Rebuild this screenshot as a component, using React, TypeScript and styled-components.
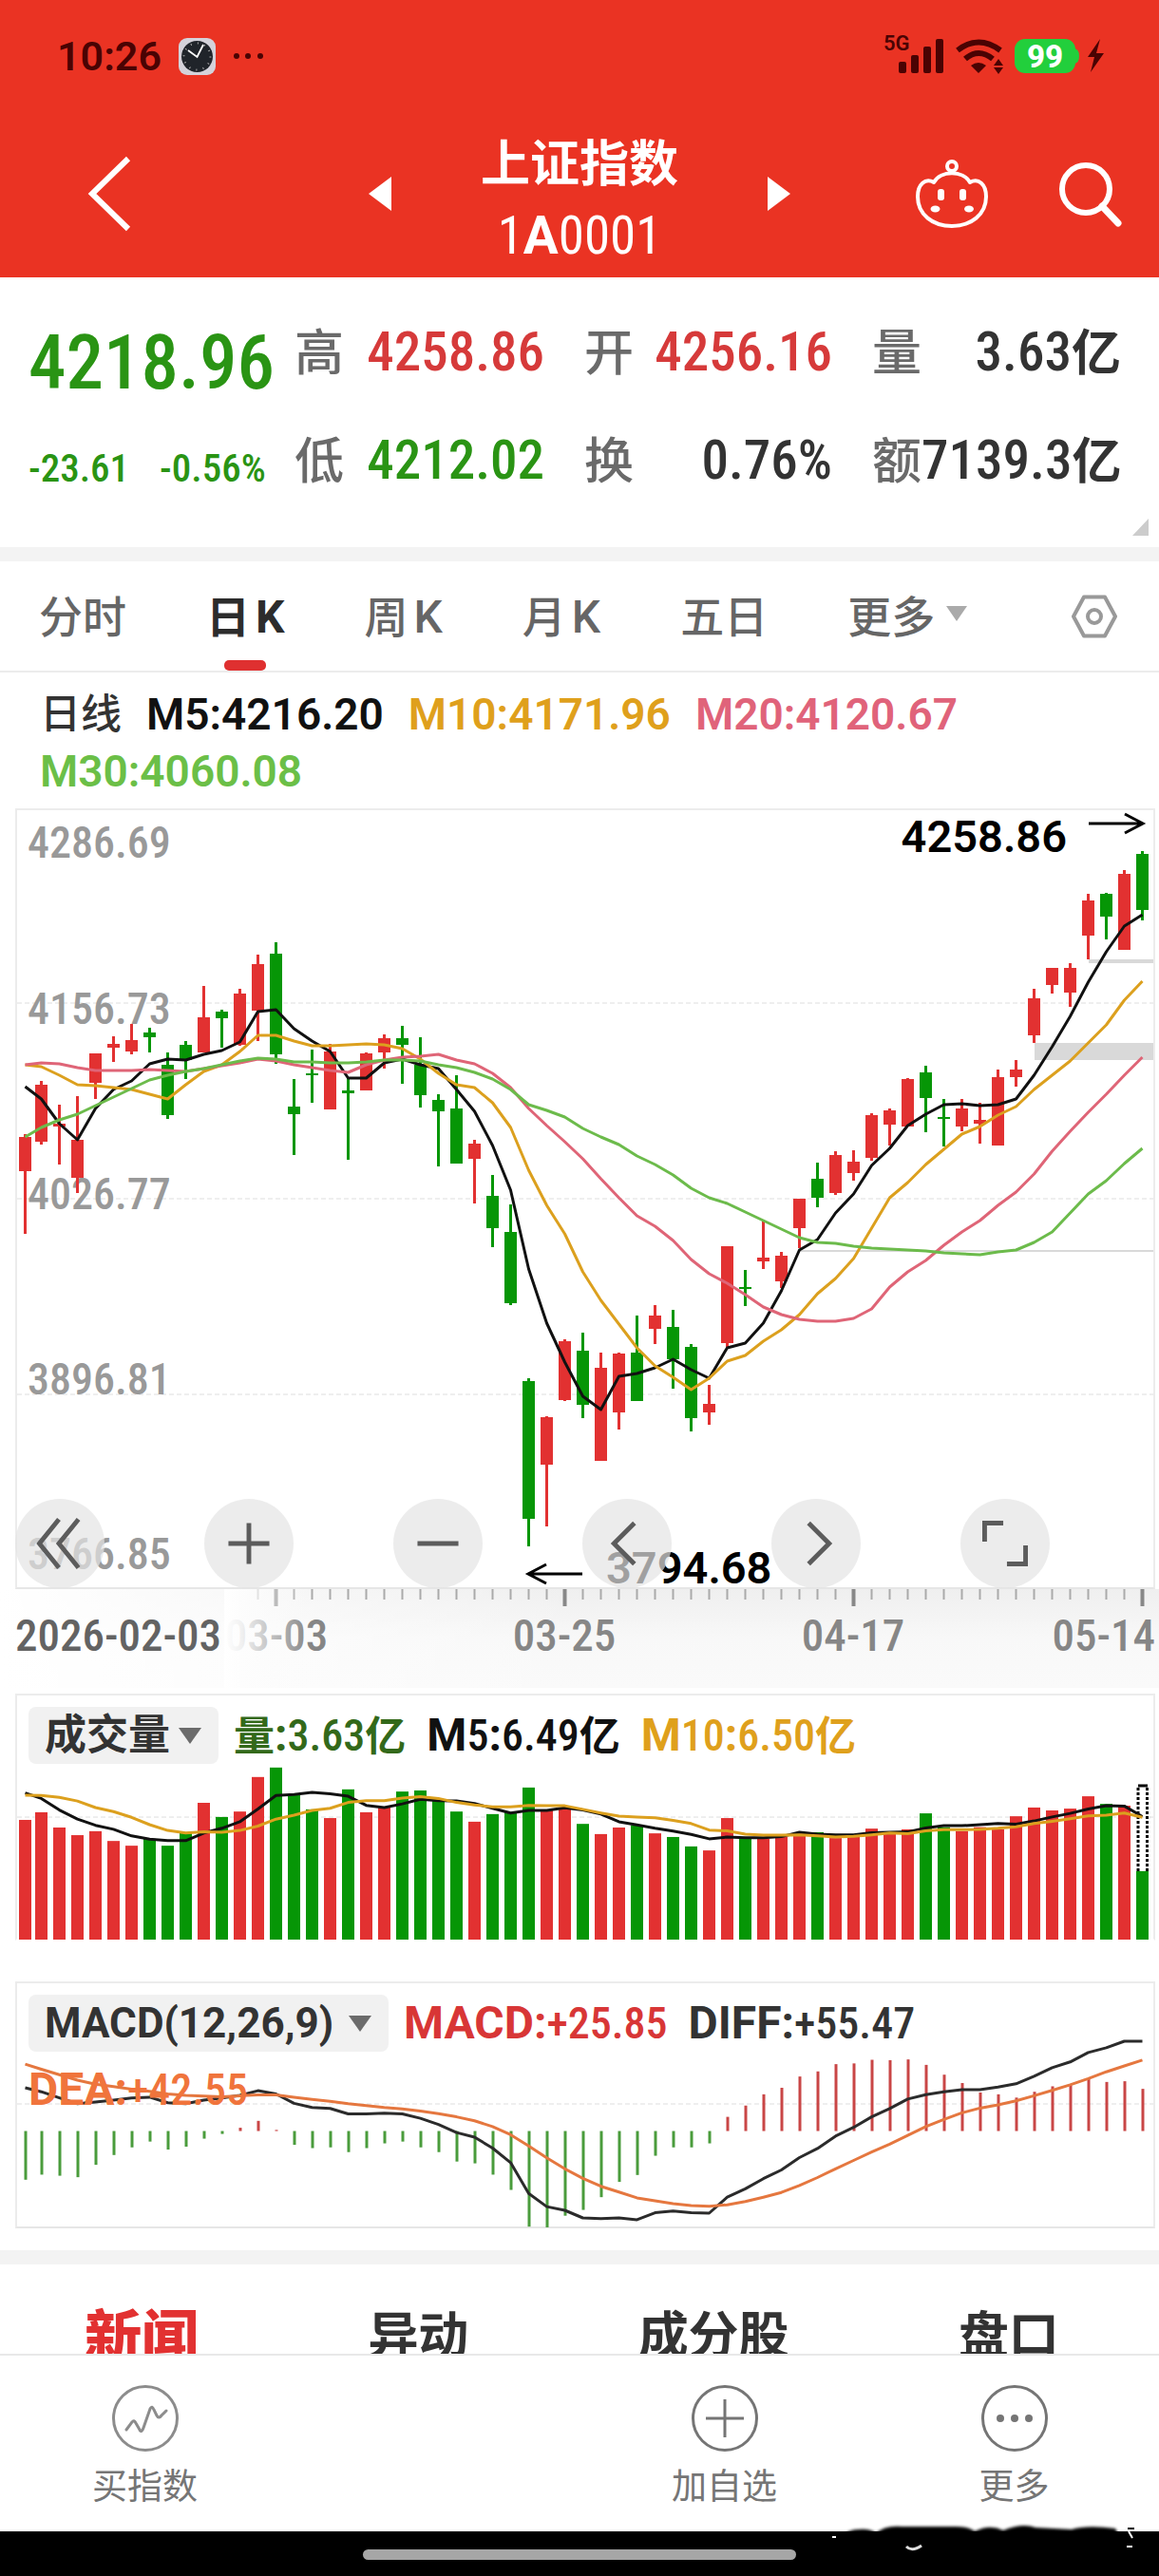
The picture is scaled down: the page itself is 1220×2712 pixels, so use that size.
import React, { useState } from "react";
import styled, { createGlobalStyle } from "styled-components";

const RED = "#e23131";
const GREEN = "#069606";
const UI = 'Roboto, "Noto Sans CJK SC", sans-serif';
const NUM = '"Roboto Condensed", Roboto, "Noto Sans CJK SC", sans-serif';

const GlobalStyle = createGlobalStyle`
  *, *::before, *::after { box-sizing: border-box; }
  body { margin: 0; background: #fff; font-family: ${UI}; color: #333; }
  button, select { border: 0; padding: 0; margin: 0; background: none; font-family: inherit; color: inherit; }
  svg { display: block; }
`;

/* ---------- header ---------- */

const Header = styled.header`
  background: #ea3323;
  color: #fff;
  height: 292px;
`;

const StatusBar = styled.div`
  display: flex;
  align-items: center;
  justify-content: space-between;
  height: 118px;
  padding: 0 54px 0 60px;
  color: #4a0303;
`;

const StatusGroup = styled.div`
  display: flex;
  align-items: center;
  gap: 18px;
`;

const Clock = styled.span`
  font-size: 43px;
  font-weight: 600;
`;

const TitleBar = styled.div`
  display: grid;
  grid-template-columns: 388px 1fr 388px;
  align-items: center;
  height: 172px;
`;

const BackButton = styled.button`
  width: 76px;
  margin-left: 80px;
`;

const Switcher = styled.div`
  display: flex;
  justify-content: space-between;
  align-items: center;
`;

const Title = styled.h1`
  margin: 0;
  padding-top: 14px;
  text-align: center;
  font-size: 52px;
  line-height: 75px;
  font-weight: 700;
`;

const Code = styled.span`
  display: block;
  font-family: ${NUM};
  font-size: 55px;
  font-weight: 400;
  b { font-family: ${UI}; }
`;

const HeaderActions = styled.div`
  display: flex;
  justify-content: flex-end;
  gap: 70px;
  padding-right: 38px;
`;

/* ---------- quote ---------- */

const Quote = styled.section`
  position: relative;
  display: grid;
  grid-template-columns: 310px 1fr;
  height: 284px;
  padding-top: 20px;
`;

const PriceBlock = styled.div`
  padding-left: 30px;
  color: #2a9414;
  font-family: ${NUM};
`;

const Price = styled.div`
  font-size: 79px;
  font-weight: 500;
  line-height: 140px;
`;

const Changes = styled.div`
  display: flex;
  gap: 32px;
  font-size: 41px;
  font-weight: 500;
  line-height: 82px;
`;

const Stats = styled.dl`
  display: grid;
  grid-template-columns: 263px 261px 262px;
  column-gap: 42px;
  grid-auto-rows: 114px;
  margin: 0;
  line-height: 118px;
`;

const Stat = styled.div`
  display: flex;
  justify-content: space-between;
  align-items: baseline;
  white-space: nowrap;
`;

const StatName = styled.dt`
  font-size: 52px;
  font-weight: 500;
  color: #6a6a6a;
`;

const StatValue = styled.dd<{ $color?: string }>`
  margin: 0;
  font-family: ${NUM};
  font-size: 57px;
  font-weight: 500;
  color: ${(p) => p.$color ?? "#333"};
  b { font-size: 52px; }
`;

const Fold = styled.span`
  position: absolute;
  right: 11px;
  bottom: 12px;
  border-left: 17px solid transparent;
  border-bottom: 18px solid #ccc;
`;

const Divider = styled.div`
  height: 15px;
  background: #f3f3f3;
`;

/* ---------- period tabs ---------- */

const Periods = styled.nav`
  display: flex;
  align-items: center;
  gap: 84px;
  height: 117px;
  padding: 0 44px 0 41px;
  border-bottom: 2px solid #ececec;
`;

const Period = styled.button<{ $active?: boolean }>`
  position: relative;
  display: flex;
  align-items: center;
  height: 115px;
  padding-bottom: 6px;
  font-size: 46px;
  font-weight: ${(p) => (p.$active ? 700 : 500)};
  color: ${(p) => (p.$active ? "#2c2c2c" : "#666")};
  white-space: nowrap;
  &::after {
    content: "";
    display: ${(p) => (p.$active ? "block" : "none")};
    position: absolute;
    left: 50%;
    bottom: 0;
    width: 44px;
    height: 11px;
    margin-left: -22px;
    border-radius: 5px;
    background: #df3030;
  }
  i { margin-left: 12px; }
`;

const PeriodName = styled.span`
  display: flex;
  align-items: baseline;
  gap: 6px;
`;

const Letter = styled.span`
  font-size: 48px;
`;

const Caret = styled.i<{ $size: number; $color: string }>`
  border: ${(p) => p.$size}px solid transparent;
  border-top: ${(p) => p.$size + 5}px solid ${(p) => p.$color};
  border-bottom: 0;
`;

const Settings = styled.button`
  margin-left: auto;
`;

/* ---------- charts ---------- */

const Averages = styled.div`
  display: flex;
  flex-wrap: wrap;
  align-content: flex-start;
  column-gap: 26px;
  padding: 14px 40px 0 42px;
  height: 143px;
  font-size: 46px;
  line-height: 60px;
  font-weight: 600;
`;

const Ink = styled.span<{ $color: string; $cjk?: boolean }>`
  height: 60px;
  color: ${(p) => p.$color};
  font-size: ${(p) => (p.$cjk ? 43 : 46)}px;
  font-weight: ${(p) => (p.$cjk ? 500 : 600)};
`;

const Panel = styled.section<{ $open?: boolean }>`
  position: relative;
  margin: 0 4px 0 16px;
  border: 2px solid #ececec;
  border-bottom-color: ${(p) => (p.$open ? "transparent" : "#e6e6e6")};
`;

const Plot = styled.svg`
  width: 100%;
  overflow: visible;
  text { font-family: ${UI}; }
  .scale { font-family: ${NUM}; font-size: 46px; font-weight: 500; fill: #999; }
  .mark { font-size: 47px; font-weight: 600; fill: #000; }
  .grid { stroke: #dedede; stroke-width: 1; stroke-dasharray: 5 3; }
`;

const Tools = styled.div`
  position: absolute;
  left: -2px;
  bottom: -1px;
  display: flex;
  gap: 105px;
`;

const Tool = styled.button`
  display: grid;
  place-items: center;
  width: 94px;
  height: 94px;
  border-radius: 50%;
  background: rgba(228, 228, 228, 0.7);
`;

const Axis = styled.div`
  height: 104px;
  margin-bottom: 6px;
  background:
    linear-gradient(90deg, #fff 0, rgba(255, 255, 255, 0) 50%),
    linear-gradient(#efefef 0, #f8f8f8 50%, #fafafa 100%);
  svg { width: 100%; }
  text { font-family: ${NUM}; font-size: 47px; font-weight: 500; fill: #868686; }
  .first { fill: #636363; }
`;

const Legend = styled.div`
  position: absolute;
  inset: 12px 0 auto 12px;
  display: flex;
  flex-wrap: wrap;
  align-items: center;
  gap: 10px 22px;
  padding-right: 40px;
  line-height: 60px;
`;

const Field = styled.label`
  position: relative;
  display: flex;
  align-items: center;
  margin-right: -6px;
  i { position: absolute; right: 18px; pointer-events: none; }
`;

const Select = styled.select<{ $width: number }>`
  appearance: none;
  width: ${(p) => p.$width}px;
  height: 60px;
  padding-left: 17px;
  border-radius: 8px;
  background: #f1f1f1;
  color: #333;
  font-size: 44px;
  font-weight: 700;
`;

const Term = styled.span<{ $color: string }>`
  height: 60px;
  color: ${(p) => p.$color};
  font-family: ${NUM};
  font-size: 46px;
  font-weight: 500;
  white-space: nowrap;
  b { font-family: ${UI}; font-size: 48px; }
  small { font-size: 43px; font-weight: 700; }
`;

const Spacer = styled.div<{ $height: number }>`
  height: ${(p) => p.$height}px;
`;

/* ---------- bottom ---------- */

const Feeds = styled.nav`
  display: flex;
  justify-content: space-around;
  height: 94px;
  padding-right: 16px;
  overflow: hidden;
`;

const Feed = styled.button<{ $active?: boolean }>`
  height: 142px;
  font-size: ${(p) => (p.$active ? 60 : 53)}px;
  font-weight: ${(p) => (p.$active ? 900 : 700)};
  color: ${(p) => (p.$active ? "#e23131" : "#333")};
`;

const Dock = styled.nav`
  display: grid;
  grid-template-columns: repeat(4, 1fr);
  height: 187px;
  border-top: 2px solid #e8e8e8;
`;

const DockButton = styled.button<{ $column: number }>`
  grid-column: ${(p) => p.$column};
  display: flex;
  flex-direction: column;
  align-items: center;
  gap: 8px;
  padding-top: 29px;
  font-size: 37px;
  line-height: 56px;
  color: #757575;
`;

const HomeBar = styled.footer`
  position: relative;
  display: flex;
  justify-content: center;
  height: 48px;
  padding-top: 19px;
  background: #000;
  &::before {
    content: "";
    width: 456px;
    height: 11px;
    border-radius: 6px;
    background: #a6a6a6;
  }
`;

const Smudge = styled.svg`
  position: absolute;
  right: 26px;
  top: -16px;
`;

/* ---------- data ---------- */

type Candle = [string, number, number, number, number];

const candles: Candle[] = [
  ["r", 1193, 1196, 1232, 1298], ["r", 1137, 1141, 1201, 1204], ["r", 1162, 1182, 1185, 1225],
  ["r", 1153, 1199, 1239, 1255], ["r", 1108, 1108, 1139, 1156], ["r", 1090, 1098, 1102, 1117],
  ["r", 1077, 1094, 1106, 1109], ["g", 1081, 1086, 1091, 1107], ["g", 1107, 1120, 1173, 1177],
  ["g", 1095, 1099, 1115, 1135], ["r", 1037, 1070, 1107, 1107], ["g", 1062, 1064, 1071, 1102],
  ["r", 1040, 1045, 1099, 1100], ["r", 1004, 1014, 1063, 1095], ["g", 991, 1003, 1109, 1119],
  ["g", 1135, 1164, 1172, 1215], ["g", 1104, 1129, 1131, 1160], ["r", 1098, 1106, 1167, 1167],
  ["g", 1134, 1147, 1150, 1220], ["r", 1107, 1108, 1147, 1147], ["r", 1088, 1092, 1107, 1124],
  ["g", 1079, 1092, 1099, 1140], ["g", 1091, 1120, 1152, 1165], ["g", 1151, 1157, 1169, 1227],
  ["g", 1131, 1166, 1224, 1224], ["r", 1199, 1203, 1219, 1266], ["g", 1236, 1258, 1292, 1312],
  ["g", 1267, 1296, 1371, 1373], ["g", 1450, 1453, 1598, 1627], ["r", 1490, 1491, 1541, 1606],
  ["r", 1409, 1411, 1473, 1474], ["g", 1402, 1421, 1478, 1492], ["r", 1423, 1439, 1537, 1537],
  ["r", 1423, 1424, 1486, 1504], ["g", 1384, 1423, 1474, 1474], ["r", 1373, 1384, 1398, 1414],
  ["g", 1378, 1396, 1430, 1461], ["g", 1414, 1417, 1492, 1506], ["r", 1457, 1477, 1486, 1499],
  ["r", 1311, 1311, 1413, 1417], ["g", 1336, 1354, 1356, 1374], ["r", 1284, 1323, 1327, 1335],
  ["r", 1317, 1321, 1348, 1355], ["r", 1261, 1261, 1292, 1313], ["g", 1223, 1240, 1260, 1270],
  ["r", 1211, 1215, 1255, 1257], ["r", 1210, 1222, 1234, 1242], ["r", 1171, 1173, 1218, 1221],
  ["r", 1166, 1168, 1183, 1205], ["r", 1134, 1135, 1185, 1185], ["g", 1121, 1128, 1155, 1191],
  ["g", 1156, 1175, 1177, 1206], ["r", 1156, 1166, 1185, 1190], ["r", 1160, 1178, 1182, 1203],
  ["r", 1125, 1133, 1205, 1205], ["r", 1115, 1125, 1133, 1143], ["r", 1040, 1050, 1089, 1097],
  ["r", 1018, 1018, 1036, 1045], ["r", 1013, 1018, 1044, 1059], ["r", 940, 947, 984, 1009],
  ["g", 939, 940, 964, 988], ["r", 915, 919, 999, 999], ["g", 895, 898, 957, 968],
];

const m5 = [1143, 1156, 1182, 1199, 1166, 1146, 1137, 1119, 1114, 1115, 1109, 1105, 1096, 1064, 1062, 1082, 1095, 1106, 1134, 1134, 1118, 1114, 1120, 1124, 1146, 1169, 1205, 1252, 1335, 1392, 1433, 1469, 1483, 1448, 1445, 1439, 1430, 1441, 1450, 1418, 1413, 1392, 1358, 1315, 1304, 1276, 1256, 1226, 1208, 1184, 1172, 1162, 1161, 1163, 1162, 1156, 1131, 1101, 1069, 1033, 1001, 974, 962];
const m10 = [1120, 1122, 1131, 1141, 1142, 1144, 1146, 1151, 1156, 1141, 1127, 1120, 1106, 1089, 1089, 1095, 1100, 1100, 1099, 1098, 1099, 1103, 1114, 1129, 1141, 1144, 1160, 1186, 1231, 1268, 1298, 1338, 1368, 1393, 1418, 1437, 1449, 1462, 1450, 1432, 1426, 1411, 1399, 1383, 1361, 1345, 1324, 1292, 1260, 1244, 1225, 1209, 1193, 1185, 1173, 1164, 1146, 1131, 1116, 1097, 1078, 1052, 1032];
const m20 = [1120, 1118, 1119, 1123, 1126, 1126, 1126, 1125, 1126, 1127, 1124, 1121, 1118, 1114, 1116, 1120, 1123, 1126, 1128, 1120, 1115, 1112, 1111, 1109, 1115, 1119, 1129, 1144, 1166, 1184, 1201, 1219, 1240, 1260, 1279, 1290, 1305, 1325, 1340, 1350, 1362, 1375, 1383, 1388, 1390, 1390, 1387, 1377, 1354, 1338, 1326, 1310, 1296, 1284, 1268, 1254, 1235, 1211, 1190, 1170, 1151, 1131, 1112];
const m30 = [1196, 1186, 1178, 1172, 1163, 1154, 1145, 1136, 1131, 1127, 1124, 1120, 1116, 1113, 1114, 1117, 1117, 1118, 1118, 1117, 1115, 1115, 1116, 1120, 1123, 1128, 1135, 1146, 1162, 1168, 1175, 1187, 1196, 1204, 1216, 1225, 1236, 1250, 1260, 1266, 1275, 1284, 1293, 1302, 1307, 1308, 1311, 1313, 1314, 1315, 1316, 1318, 1319, 1320, 1317, 1315, 1307, 1296, 1276, 1256, 1242, 1224, 1208];

const volumeColors = "rrrrrrrgggrgrrgggrgrrggggrgggrrgrrgrggrrgrrrgrrrrrggrrrrrrrrgrg";
const volumes = [405, 384, 426, 447, 436, 463, 476, 457, 476, 440, 358, 397, 382, 287, 261, 337, 376, 400, 321, 384, 370, 327, 324, 353, 382, 410, 389, 384, 316, 378, 373, 416, 444, 426, 420, 442, 452, 478, 489, 400, 457, 457, 452, 442, 439, 455, 452, 429, 444, 431, 387, 425, 436, 425, 431, 395, 371, 379, 374, 340, 361, 366, 546];
const volumeM5 = [331, 346, 378, 403, 420, 431, 449, 458, 462, 462, 441, 428, 410, 375, 338, 335, 329, 333, 340, 365, 371, 361, 348, 352, 353, 360, 373, 386, 379, 379, 372, 378, 389, 410, 419, 428, 436, 445, 457, 452, 454, 454, 451, 439, 444, 446, 446, 440, 439, 438, 427, 421, 421, 418, 415, 417, 408, 397, 387, 375, 366, 367, 396];
const volumeM10 = [337, 338, 343, 353, 371, 382, 398, 418, 434, 441, 438, 439, 434, 422, 403, 392, 379, 373, 357, 352, 352, 345, 341, 346, 357, 364, 369, 369, 365, 366, 366, 376, 386, 395, 397, 399, 406, 415, 433, 435, 444, 447, 447, 446, 449, 452, 450, 446, 441, 443, 435, 432, 432, 431, 428, 424, 415, 409, 402, 394, 392, 386, 398];

const macd = [1395, 1381, 1384, 1388, 1354, 1327, 1306, 1290, 1312, 1304, 1282, 1269, 1252, 1233, 1258, 1299, 1308, 1306, 1319, 1308, 1295, 1290, 1306, 1319, 1345, 1350, 1381, 1423, 1524, 1526, 1494, 1478, 1443, 1401, 1382, 1329, 1306, 1306, 1295, 1222, 1191, 1160, 1142, 1111, 1097, 1077, 1075, 1065, 1066, 1064, 1079, 1106, 1129, 1155, 1160, 1169, 1153, 1138, 1135, 1116, 1126, 1124, 1145];
const diff = [1142, 1153, 1170, 1186, 1181, 1176, 1170, 1168, 1183, 1186, 1176, 1170, 1163, 1150, 1159, 1185, 1196, 1199, 1214, 1214, 1212, 1214, 1226, 1243, 1265, 1278, 1308, 1348, 1433, 1469, 1479, 1500, 1502, 1500, 1505, 1486, 1481, 1486, 1487, 1443, 1420, 1392, 1368, 1334, 1309, 1275, 1251, 1222, 1199, 1173, 1161, 1153, 1147, 1147, 1140, 1131, 1110, 1087, 1071, 1045, 1032, 1014, 1014];
const dea = [1077, 1091, 1106, 1121, 1132, 1139, 1146, 1152, 1159, 1163, 1165, 1167, 1164, 1162, 1162, 1168, 1174, 1179, 1186, 1191, 1196, 1200, 1206, 1213, 1222, 1233, 1249, 1271, 1302, 1335, 1365, 1391, 1413, 1429, 1445, 1453, 1461, 1466, 1468, 1464, 1455, 1443, 1430, 1411, 1389, 1365, 1342, 1319, 1297, 1273, 1249, 1229, 1211, 1198, 1189, 1178, 1164, 1149, 1134, 1117, 1098, 1082, 1066];

const dayX = (i: number) => (i === 0 ? 26.5 : 24.5 + 19 * i);
const same = (v: number) => v;
const studyY = (v: number) => 1760 + v / 2.6133;
const line = (values: number[], y: (v: number) => number) =>
  values.map((v, i) => `${dayX(i)},${y(v).toFixed(1)}`).join(" ");
const ink = (c: string) => (c === "r" ? RED : GREEN);

function Line({ values, color, y = same, width = 3 }: { values: number[]; color: string; y?: (v: number) => number; width?: number }) {
  return <polyline points={line(values, y)} fill="none" stroke={color} strokeWidth={width} strokeLinejoin="round" />;
}

function PriceChart() {
  return (
    <Plot viewBox="18 852 1196 818" role="img" aria-label="上证指数 日K">
      {[1055, 1261, 1467].map((y) => (
        <line key={y} className="grid" x1="18" x2="1214" y1={y} y2={y} />
      ))}
      <g fill="#d9d9d9">
        <rect x="1146" y="1009" width="68" height="4" />
        <rect x="1089" y="1097" width="125" height="18" />
        <rect x="842" y="1315" width="372" height="2" />
      </g>
      <text className="scale" x="29" y="902">4286.69</text>
      <text className="scale" x="29" y="1077">4156.73</text>
      <text className="scale" x="29" y="1272">4026.77</text>
      <text className="scale" x="29" y="1467">3896.81</text>
      <text className="scale" x="29" y="1651">3766.85</text>
      {candles.map(([c, high, top, bottom, low], i) => (
        <g key={i} fill={ink(c)}>
          <rect x={dayX(i) - 1.5} y={high} width="3" height={low - high} />
          <rect x={dayX(i) - 6.5} y={top} width="13" height={bottom - top} />
        </g>
      ))}
      <Line values={m5} color="#111" />
      <Line values={m10} color="#dca01e" />
      <Line values={m20} color="#df6577" />
      <Line values={m30} color="#6cbb4b" />
      <text className="mark" x="1123" y="896" textAnchor="end">4258.86</text>
      <text className="mark" x="638" y="1666">3794.68</text>
      <g fill="none" stroke="#000" strokeWidth="3">
        <path d="M1146 866H1202M1184 856L1203 866L1184 876" />
        <path d="M613 1656H557M575 1646L556 1656L575 1666" />
      </g>
    </Plot>
  );
}

function TimeAxis() {
  const days = candles.map((_, i) => i).slice(13);
  return (
    <Axis>
      <svg viewBox="0 1672 1220 104" role="img" aria-label="日期">
        <defs>
          <linearGradient id="fade">
            <stop offset="0" stopColor="#fff" />
            <stop offset="0.2" stopColor="#fdfdfd" stopOpacity="0.9" />
            <stop offset="1" stopColor="#fafafa" stopOpacity="0" />
          </linearGradient>
        </defs>
        {days.map((i) => {
          const major = (i - 14) % 16 === 0;
          return (
            <rect key={i} x={dayX(i) - (major ? 2 : 1)} y="1672" width={major ? 4 : 2} height={major ? 18 : 11} fill={major ? "#888" : "#aaa"} />
          );
        })}
        <text x="291" y="1737" textAnchor="middle">03-03</text>
        <rect x="236" y="1672" width="90" height="104" fill="url(#fade)" />
        <text className="first" x="16" y="1737">2026-02-03</text>
        <text x="594" y="1737" textAnchor="middle">03-25</text>
        <text x="898" y="1737" textAnchor="middle">04-17</text>
        <text x="1216" y="1737" textAnchor="end">05-14</text>
      </svg>
    </Axis>
  );
}

function VolumeChart() {
  return (
    <Plot viewBox="18 1784 1196 256" role="img" aria-label="成交量">
      <line className="grid" x1="18" x2="1214" y1="1912" y2="1912" />
      {volumes.map((v, i) => (
        <rect key={i} x={dayX(i) - 6.5} y={studyY(v)} width="13" height={2041 - studyY(v)} fill={ink(volumeColors[i])} />
      ))}
      <path d="M1198 1969V1880M1207.500 1969V1880" stroke="#000" strokeWidth="3" strokeDasharray="3 2" />
      <path d="M1198 1879H1208" stroke="#000" strokeWidth="3" />
      <Line values={volumeM5} color="#111" y={studyY} />
      <Line values={volumeM10} color="#dca01e" y={studyY} />
    </Plot>
  );
}

function MacdChart() {
  const zero = studyY(1261);
  return (
    <Plot viewBox="18 2087 1196 256" role="img" aria-label="MACD">
      <line className="grid" x1="18" x2="1214" y1="2214" y2="2214" />
      {macd.map((v, i) => (
        <rect key={i} x={dayX(i) - 1} y={Math.min(zero, studyY(v))} width="3" height={Math.abs(studyY(v) - zero)} fill={v > 1261 ? "#4a9c3c" : "#c94646"} />
      ))}
      <Line values={diff} color="#2b2b2b" y={studyY} />
      <Line values={dea} color="#e5773f" y={studyY} />
    </Plot>
  );
}

/* ---------- icons ---------- */

const toolIcons: [string, string][] = [
  ["最早", "M47 22L26 48L47 74M68 22L47 48L68 74"],
  ["放大", "M48 26V70M26 48H70"],
  ["缩小", "M26 48H70"],
  ["向左", "M56 26L34 48L56 70"],
  ["向右", "M40 26L62 48L40 70"],
  ["全屏", "M26 46V26H46M50 70H70V50"],
];

function ClockIcon() {
  return (
    <svg width="39" height="39" viewBox="0 0 39 39">
      <rect width="39" height="39" rx="9" fill="#d4d2da" />
      <circle cx="19.500" cy="19.500" r="16.500" fill="#20242a" />
      <circle cx="19.500" cy="19.500" r="14" fill="none" stroke="#aaa" strokeWidth="2" strokeDasharray="1 6.330" />
      <path d="M10 13L19.500 20L26 7" fill="none" stroke="#fff" strokeWidth="1.800" />
    </svg>
  );
}

function SignalIcons() {
  return (
    <svg width="236" height="50" viewBox="930 34 236 50" fill="#4a0303">
      <text x="930" y="53" fontSize="22" fontWeight="600" fontFamily="Roboto">5G</text>
      <rect x="946" y="65" width="8" height="12" rx="2" />
      <rect x="959" y="58" width="8" height="19" rx="2" />
      <rect x="972" y="49" width="8" height="28" rx="2" />
      <rect x="985" y="41" width="8" height="36" rx="2" />
      <g fill="none" stroke="#4a0303" strokeWidth="6">
        <path d="M1008 53Q1030 36 1053 53" />
        <path d="M1016 62Q1030 50 1045 62" />
      </g>
      <path d="M1022 69Q1030 63 1038 69L1030 77Z" />
      <path d="M1046 69L1051 62L1056 69ZM1046 71L1051 78L1056 71Z" />
      <rect x="1068" y="41" width="64" height="36" rx="11" fill="#22cf3c" />
      <path d="M1131 51Q1136 52 1136 59T1131 67Z" fill="#22cf3c" />
      <text x="1100" y="71" textAnchor="middle" fontSize="33" fontWeight="800" fontFamily="Roboto" fill="#fff">99</text>
      <path d="M1158 41L1145 60H1152L1148 76L1162 56H1154Z" />
    </svg>
  );
}

function RobotIcon() {
  return (
    <svg width="80" height="80" viewBox="962 165 80 80" fill="none" stroke="#fff" strokeWidth="4">
      <circle cx="1002" cy="176" r="5" />
      <path d="M983 193C990 180 1014 180 1021 193C1030 188 1038 195 1038 208C1038 227 1022 239 1002 239C982 239 966 227 966 208C966 195 974 188 983 193Z" strokeLinejoin="round" />
      <g fill="#fff" stroke="none">
        <rect x="987" y="200" width="7" height="12" rx="3" />
        <rect x="1010" y="200" width="7" height="12" rx="3" />
        <ellipse cx="984.500" cy="221" rx="5" ry="3.500" />
        <ellipse cx="1020" cy="221" rx="5" ry="3.500" />
      </g>
    </svg>
  );
}

function ToolButton({ label, path }: { label: string; path: string }) {
  return (
    <Tool aria-label={label}>
      <svg width="94" height="94" viewBox="0 0 96 96" fill="none" stroke="#5c5c5c" strokeWidth="5">
        <path d={path} />
      </svg>
    </Tool>
  );
}

/* ---------- page ---------- */

const periods = [
  { id: "minute", name: "分时" },
  { id: "day", name: "日", letter: "K" },
  { id: "week", name: "周", letter: "K" },
  { id: "month", name: "月", letter: "K" },
  { id: "five", name: "五日" },
];
const feeds = ["新闻", "异动", "成分股", "盘口"];

export default function App() {
  const [period, setPeriod] = useState("day");
  const [feed, setFeed] = useState("新闻");

  return (
    <>
      <GlobalStyle />
      <Header>
        <StatusBar>
          <StatusGroup>
            <Clock>10:26</Clock>
            <ClockIcon />
            <svg width="32" height="8" viewBox="0 0 32 8" fill="#4a0303">
              <circle cx="4" cy="4" r="3" />
              <circle cx="16" cy="4" r="3" />
              <circle cx="29" cy="4" r="3" />
            </svg>
          </StatusGroup>
          <SignalIcons />
        </StatusBar>
        <TitleBar>
          <BackButton aria-label="返回">
            <svg width="70" height="84" viewBox="80 160 70 84" fill="none" stroke="#fff" strokeWidth="6">
              <path d="M135 165L97 202L135 239" />
            </svg>
          </BackButton>
          <Switcher>
            <button aria-label="上一个">
              <svg width="24" height="36" viewBox="0 0 24 36" fill="#fff"><path d="M24 0V36L0 18Z" /></svg>
            </button>
            <Title>
              上证指数
              <Code>1<b>A</b>0001</Code>
            </Title>
            <button aria-label="下一个">
              <svg width="24" height="36" viewBox="0 0 24 36" fill="#fff"><path d="M0 0V36L24 18Z" /></svg>
            </button>
          </Switcher>
          <HeaderActions>
            <button aria-label="助手"><RobotIcon /></button>
            <button aria-label="搜索">
              <svg width="70" height="72" viewBox="1112 169 70 72" fill="none" stroke="#fff" strokeWidth="6">
                <circle cx="1143" cy="200" r="25" />
                <path d="M1160 218L1177 236" strokeLinecap="round" strokeWidth="7" />
              </svg>
            </button>
          </HeaderActions>
        </TitleBar>
      </Header>

      <Quote>
        <PriceBlock>
          <Price>4218.96</Price>
          <Changes><span>-23.61</span><span>-0.56%</span></Changes>
        </PriceBlock>
        <Stats>
          <Stat><StatName>高</StatName><StatValue $color="#d63a3a">4258.86</StatValue></Stat>
          <Stat><StatName>开</StatName><StatValue $color="#d63a3a">4256.16</StatValue></Stat>
          <Stat><StatName>量</StatName><StatValue>3.63<b>亿</b></StatValue></Stat>
          <Stat><StatName>低</StatName><StatValue $color="#2a9414">4212.02</StatValue></Stat>
          <Stat><StatName>换</StatName><StatValue>0.76%</StatValue></Stat>
          <Stat><StatName>额</StatName><StatValue>7139.3<b>亿</b></StatValue></Stat>
        </Stats>
        <Fold />
      </Quote>
      <Divider />

      <Periods>
        {periods.map((p) => (
          <Period key={p.id} $active={p.id === period} onClick={() => setPeriod(p.id)}>
            <PeriodName>
              {p.name}
              {p.letter && <Letter>{p.letter}</Letter>}
            </PeriodName>
          </Period>
        ))}
        <Period aria-haspopup="menu">更多<Caret $size={11} $color="#aaa" /></Period>
        <Settings aria-label="设置">
          <svg width="48" height="48" viewBox="0 0 48 48" fill="none" stroke="#999" strokeWidth="4" strokeLinejoin="round">
            <path d="M13 3.500H35L46 24L35 44.500H13L2 24Z" />
            <circle cx="24" cy="24" r="7" />
          </svg>
        </Settings>
      </Periods>

      <Averages>
        <Ink $color="#333" $cjk>日线</Ink>
        <Ink $color="#111">M5:4216.20</Ink>
        <Ink $color="#dfa01c">M10:4171.96</Ink>
        <Ink $color="#e0637a">M20:4120.67</Ink>
        <Ink $color="#6bbf47">M30:4060.08</Ink>
      </Averages>

      <Panel>
        <PriceChart />
        <Tools>
          {toolIcons.map(([label, path]) => <ToolButton key={label} label={label} path={path} />)}
        </Tools>
      </Panel>
      <TimeAxis />

      <Panel $open>
        <VolumeChart />
        <Legend>
          <Field>
            <Select $width={200} aria-label="副图指标一"><option>成交量</option></Select>
            <Caret $size={12} $color="#6b6b6b" />
          </Field>
          <Term $color="#33691a"><small>量</small><b>:</b>3.63<small>亿</small></Term>
          <Term $color="#111"><b>M</b>5<b>:</b>6.49<small>亿</small></Term>
          <Term $color="#dfa01c"><b>M</b>10<b>:</b>6.50<small>亿</small></Term>
        </Legend>
      </Panel>
      <Spacer $height={43} />
      <Panel>
        <MacdChart />
        <Legend>
          <Field>
            <Select $width={379} aria-label="副图指标二"><option>MACD(12,26,9)</option></Select>
            <Caret $size={12} $color="#6b6b6b" />
          </Field>
          <Term $color="#d83636"><b>MACD:</b>+25.85</Term>
          <Term $color="#333"><b>DIFF:</b>+55.47</Term>
          <Term $color="#f0743c"><b>DEA:</b>+42.55</Term>
        </Legend>
      </Panel>
      <Spacer $height={23} />

      <Divider />
      <Feeds>
        {feeds.map((f) => (
          <Feed key={f} $active={f === feed} onClick={() => setFeed(f)}>{f}</Feed>
        ))}
      </Feeds>

      <Dock>
        <DockButton $column={1}>
          <svg width="74" height="74" viewBox="0 0 74 74" fill="none" stroke="#8c8c8c" strokeWidth="3">
            <circle cx="37" cy="37" r="33.500" />
            <path d="M17 49L23 41Q25 38 27 42L31 49Q33 53 35 47L42 27Q44 23 46 28L49 34Q51 38 54 34L59 29" strokeLinecap="round" />
          </svg>
          买指数
        </DockButton>
        <DockButton $column={3}>
          <svg width="74" height="74" viewBox="0 0 74 74" fill="none" stroke="#757575" strokeWidth="3">
            <circle cx="37" cy="37" r="33.500" />
            <path d="M37 17V57M17 37H57" />
          </svg>
          加自选
        </DockButton>
        <DockButton $column={4}>
          <svg width="74" height="74" viewBox="0 0 74 74" fill="#757575">
            <circle cx="37" cy="37" r="33.500" fill="none" stroke="#757575" strokeWidth="3" />
            <circle cx="22" cy="37" r="4" />
            <circle cx="37" cy="37" r="4" />
            <circle cx="52" cy="37" r="4" />
          </svg>
          更多
        </DockButton>
      </Dock>
      <HomeBar>
        <Smudge width="320" height="48" viewBox="872 2648 320 48">
          <defs>
            <filter id="soft"><feGaussianBlur stdDeviation="1.500" /></filter>
          </defs>
          <path d="M880 2680Q884 2662 902 2662Q914 2661 920 2666Q930 2657 948 2659H1004Q1018 2659 1024 2664Q1040 2656 1054 2663Q1074 2655 1088 2660L1126 2662Q1142 2657 1172 2661L1182 2680Z" filter="url(#soft)" />
          <path d="M952 2680Q958 2686 968 2679" fill="none" stroke="#ddd" strokeWidth="3" />
          <path d="M1185 2661H1192" stroke="#000" strokeWidth="2" />
          <path d="M1186 2664L1190 2671M1184 2680H1190M874 2670H878" stroke="#fff" strokeWidth="2" />
        </Smudge>
      </HomeBar>
    </>
  );
}
